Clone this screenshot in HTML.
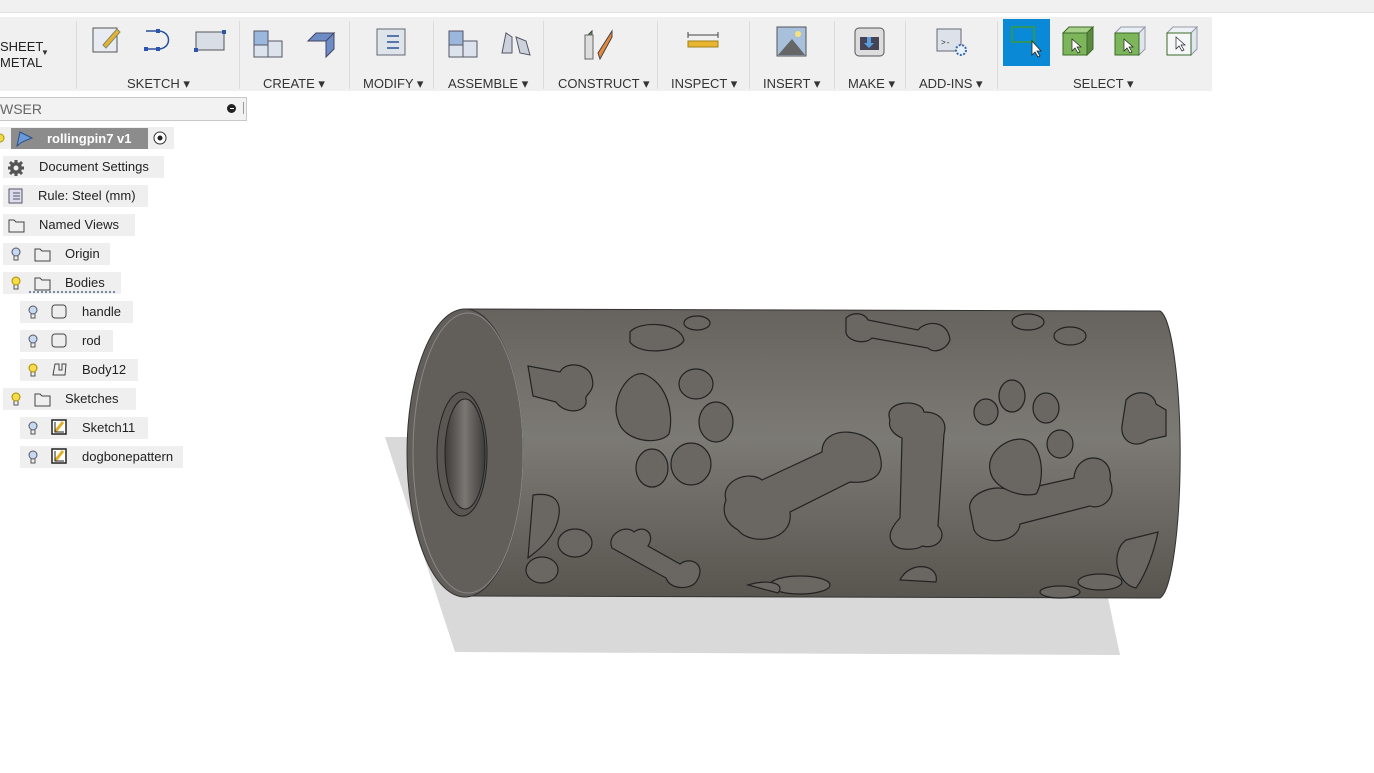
<!DOCTYPE html>
<html><head><meta charset="utf-8"><style>
body{margin:0;width:1374px;height:773px;background:#fff;position:relative;overflow:hidden;font-family:"Liberation Sans",sans-serif;}
.a{position:absolute}
.tb{left:0;top:17px;width:1212px;height:74px;background:#f0f0f0}
.sep{position:absolute;top:4px;width:1px;height:68px;background:#dcdcdc}
.lbl{position:absolute;top:59px;font-size:13px;color:#333;white-space:nowrap}
.row{position:absolute;height:22px;background:#efefef;font-size:13px;color:#222;line-height:22px}
.ic{position:absolute}
</style></head><body>
<div class="a" style="left:0;top:0;width:1374px;height:12px;background:#f0f0f0;border-bottom:1px solid #e2e2e2"></div>
<div class="a tb">
 <div class="a" style="left:0;top:22px;font-size:13px;line-height:16px;color:#222">SHEET<br>METAL</div>
 <div class="a" style="left:41px;top:31px;font-size:8px;color:#333">▼</div>
 <div class="sep" style="left:76px"></div><div class="sep" style="left:239px"></div><div class="sep" style="left:349px"></div><div class="sep" style="left:433px"></div><div class="sep" style="left:543px"></div><div class="sep" style="left:657px"></div><div class="sep" style="left:749px"></div><div class="sep" style="left:834px"></div><div class="sep" style="left:905px"></div><div class="sep" style="left:997px"></div>
 <div class="lbl" style="left:127px">SKETCH ▾</div>
 <div class="lbl" style="left:263px">CREATE ▾</div>
 <div class="lbl" style="left:363px">MODIFY ▾</div>
 <div class="lbl" style="left:448px">ASSEMBLE ▾</div>
 <div class="lbl" style="left:558px">CONSTRUCT ▾</div>
 <div class="lbl" style="left:671px">INSPECT ▾</div>
 <div class="lbl" style="left:763px">INSERT ▾</div>
 <div class="lbl" style="left:848px">MAKE ▾</div>
 <div class="lbl" style="left:919px">ADD-INS ▾</div>
 <div class="lbl" style="left:1073px">SELECT ▾</div>
 <div class="a" style="left:1003px;top:2px;width:47px;height:47px;background:#0a8ad6"></div>
 <svg class="a" style="left:0;top:0" width="1212" height="60">
  <g stroke="#555" fill="#e8ecf2"><rect x="93" y="11" width="24" height="24"/><path d="M103 28 L117 12 l3 3 L106 31z" fill="#e4b430" stroke="#886"/></g>
  <path d="M146 32h12 M158 32 c14 0 14-18 0-18 M146 14h12" fill="none" stroke="#2a4f9a" stroke-width="1.5"/><rect x="144" y="30" width="4" height="4" fill="#2a56b0"/><rect x="156" y="30" width="4" height="4" fill="#2a56b0"/><rect x="156" y="12" width="4" height="4" fill="#2a56b0"/>
  <rect x="196" y="15" width="28" height="18" fill="#d8dde6" stroke="#555"/><rect x="194" y="31" width="4" height="4" fill="#2a56b0"/><rect x="222" y="13" width="4" height="4" fill="#2a56b0"/>
  <g stroke="#556" fill="#dde3ec"><rect x="254" y="14" width="14" height="14" fill="#9cb7de"/><rect x="254" y="28" width="14" height="12"/><rect x="268" y="24" width="14" height="16"/></g>
  <path d="M308 24 l8-8 h18 l-8 8z M326 24 l8-8 v16 l-8 8z" fill="#6d8bc4" stroke="#446"/><path d="M308 24h18v16" fill="none" stroke="#446"/>
  <rect x="377" y="12" width="28" height="26" fill="#dfe3ea" stroke="#667"/><g stroke="#5577aa" stroke-width="2"><path d="M387 19h12M387 25h12M387 31h12"/></g>
  <g stroke="#556" fill="#dde3ec"><rect x="449" y="14" width="14" height="14" fill="#9cb7de"/><rect x="449" y="28" width="14" height="12"/><rect x="463" y="24" width="14" height="16"/></g>
  <path d="M502 36 l4-20 6 4 v16z M516 20 l10 4 4 14 -10-2z" fill="#ccd2dc" stroke="#556"/>
  <path d="M586 20 l6-6 v24 l-6 4z" fill="#4c9a48" stroke="#444"/><path d="M598 36 l14-22 v6 l-12 22z" fill="#e8883a" stroke="#444"/><rect x="585" y="18" width="8" height="24" fill="#ddd" stroke="#666"/>
  <path d="M688 18h30 M688 15v6 M718 15v6" stroke="#444"/><rect x="688" y="24" width="30" height="6" fill="#e9b430" stroke="#a08020"/>
  <rect x="777" y="10" width="29" height="29" fill="#a8c0dc" stroke="#555"/><path d="M778 38 l14-16 13 16z" fill="#666"/><circle cx="798" cy="17" r="3" fill="#f6e27a"/>
  <rect x="855" y="11" width="29" height="28" rx="4" fill="#ddd" stroke="#555"/><rect x="860" y="20" width="19" height="13" fill="#445"/><path d="M867 20v6h-3l5 5 5-5h-3v-6z" fill="#5aa0e0"/>
  <rect x="937" y="12" width="24" height="22" fill="#dde2ea" stroke="#667"/><text x="941" y="28" font-size="8" fill="#333" font-family="Liberation Mono">&gt;-</text><circle cx="961" cy="33" r="5" fill="#e8f0fa" stroke="#3a6ab0" stroke-width="2" stroke-dasharray="2 1.5"/>
  <rect x="1012" y="10" width="22" height="15" fill="none" stroke="#3a9a3a" stroke-width="1.5"/><path d="M1032 24 v14 l3-3 3 5 2-1 -3-5 4 0z" fill="#fff" stroke="#222" stroke-width=".8"/>
  <g stroke="#3d6a2a"><path d="M1063 16 l6-6 h24 l-6 6z" fill="#a8d08a"/><path d="M1087 16 l6-6 v22 l-6 6z" fill="#5b8a3e"/><rect x="1063" y="16" width="24" height="22" fill="#7cb55a"/></g><path d="M1072 22v12l3-3 3 5 2-1-3-5h4z" fill="#fff" stroke="#222" stroke-width=".7"/>
  <g stroke="#3d6a2a"><path d="M1115 16 l6-6 h24 l-6 6z" fill="#e8eef4" stroke="#99a"/><path d="M1139 16 l6-6 v22 l-6 6z" fill="#e0e6ee" stroke="#99a"/><rect x="1115" y="16" width="24" height="22" fill="#7cb55a"/></g><path d="M1124 22v12l3-3 3 5 2-1-3-5h4z" fill="#fff" stroke="#222" stroke-width=".7"/>
  <g stroke="#99a"><path d="M1167 16 l6-6 h24 l-6 6z" fill="#eef2f6"/><path d="M1191 16 l6-6 v22 l-6 6z" fill="#dfe6ee"/><rect x="1167" y="16" width="24" height="22" fill="#f4f6f8" stroke="#3d6a2a"/></g><path d="M1176 20v12l3-3 3 5 2-1-3-5h4z" fill="#fff" stroke="#222" stroke-width=".7"/>
 </svg>
</div>
<div class="a" style="left:0;top:97px;width:246px;height:22px;background:#f2f2f2;border:1px solid #c8c8c8;border-left:none"></div>
<div class="a" style="left:0;top:101px;font-size:14px;color:#666">WSER</div>
<div class="a" style="left:227px;top:104px;width:9px;height:9px;border-radius:50%;background:#222"></div>
<div class="a" style="left:230px;top:108px;width:4px;height:1px;background:#fff"></div>
<div class="a" style="left:243px;top:102px;width:1px;height:12px;background:#999"></div>

<div class="row" style="left:0;top:127px;width:174px"></div>
<div class="a" style="left:11px;top:128px;width:137px;height:21px;background:#8c8c8c"></div>
<div class="a" style="left:47px;top:131px;font-size:13px;font-weight:bold;color:#fff">rollingpin7 v1</div>
<svg class="a" style="left:0;top:128px" width="175" height="24"><circle cx="0" cy="10" r="4" fill="#f2d84a" stroke="#a90"/><path d="M17 18 L20 4 l12 6 -10 4z" fill="#6b9ad8" stroke="#2a4f8a"/><circle cx="160" cy="10" r="6" fill="#fff" stroke="#333"/><circle cx="160" cy="10" r="2.5" fill="#222"/></svg>
<div class="row" style="left:3px;top:156px;width:161px;padding-left:36px;box-sizing:border-box">Document Settings</div>
<div class="row" style="left:3px;top:185px;width:145px;padding-left:35px;box-sizing:border-box">Rule: Steel (mm)</div>
<div class="row" style="left:3px;top:214px;width:132px;padding-left:36px;box-sizing:border-box">Named Views</div>
<div class="row" style="left:3px;top:243px;width:107px;padding-left:62px;box-sizing:border-box">Origin</div>
<div class="row" style="left:3px;top:272px;width:118px;padding-left:62px;box-sizing:border-box">Bodies</div>
<div class="a" style="left:29px;top:291px;width:88px;height:2px;background:repeating-linear-gradient(90deg,#7a8aa0 0 2px,transparent 2px 4px)"></div>
<div class="row" style="left:20px;top:301px;width:113px;padding-left:62px;box-sizing:border-box">handle</div>
<div class="row" style="left:20px;top:330px;width:93px;padding-left:62px;box-sizing:border-box">rod</div>
<div class="row" style="left:20px;top:359px;width:118px;padding-left:62px;box-sizing:border-box">Body12</div>
<div class="row" style="left:3px;top:388px;width:133px;padding-left:62px;box-sizing:border-box">Sketches</div>
<div class="row" style="left:20px;top:417px;width:128px;padding-left:62px;box-sizing:border-box">Sketch11</div>
<div class="row" style="left:20px;top:446px;width:163px;padding-left:62px;box-sizing:border-box">dogbonepattern</div>
<svg class="a" style="left:0;top:150px" width="80" height="330">
 <g transform="translate(16,18)"><circle r="6" fill="#555"/><circle r="2.5" fill="#efefef"/><g stroke="#555" stroke-width="3"><path d="M0-8v16M-8 0h16M-6-6l12 12M6-6l-12 12"/></g><circle r="2.5" fill="#efefef"/></g>
 <rect x="9" y="39" width="13" height="14" fill="#dde" stroke="#556"/><path d="M13 43h7M13 46h7M13 49h7" stroke="#556"/>
 <path d="M9 70h5l2 2h8v10H9z" fill="none" stroke="#444"/>
 <path d="M35 99h5l2 2h8v10H35z" fill="none" stroke="#444"/>
 <path d="M35 128h5l2 2h8v10H35z" fill="none" stroke="#444"/>
 <path d="M35 244h5l2 2h8v10H35z" fill="none" stroke="#444"/>
 <g stroke="#556" fill="#c7d9f0"><circle cx="16" cy="102" r="4"/><circle cx="33" cy="160" r="4"/><circle cx="33" cy="189" r="4"/><circle cx="33" cy="276" r="4"/><circle cx="33" cy="305" r="4"/></g>
 <g stroke="#a98a00" fill="#f5dc4a"><circle cx="16" cy="131" r="4"/><circle cx="33" cy="218" r="4"/><circle cx="16" cy="247" r="4"/></g>
 <g stroke="#555" stroke-width="1"><path d="M14 106v4h4v-4M31 164v4h4v-4M31 193v4h4v-4M31 222v4h4v-4M14 135v4h4v-4M14 251v4h4v-4M31 280v4h4v-4M31 309v4h4v-4" fill="none"/></g>
 <rect x="52" y="155" width="14" height="13" rx="3" fill="#eee" stroke="#444"/><rect x="52" y="184" width="14" height="13" rx="3" fill="#eee" stroke="#444"/>
 <path d="M53 225l2-11h4v6h3v-6h4l-1 11z" fill="none" stroke="#444"/>
 <rect x="52" y="270" width="14" height="14" fill="#fff" stroke="#222" stroke-width="1.5"/><path d="M55 282l8-10" stroke="#e0b020" stroke-width="3"/><path d="M55 272v10h9" fill="none" stroke="#222"/>
 <rect x="52" y="299" width="14" height="14" fill="#fff" stroke="#222" stroke-width="1.5"/><path d="M55 311l8-10" stroke="#e0b020" stroke-width="3"/><path d="M55 301v10h9" fill="none" stroke="#222"/>
</svg>

<svg class="a" style="left:0;top:0" width="1374" height="773">
 <defs>
  <linearGradient id="cy" x1="0" y1="0" x2="0" y2="1">
   <stop offset="0" stop-color="#66625d"/><stop offset="0.15" stop-color="#6e6b66"/><stop offset="0.45" stop-color="#7c7a75"/><stop offset="0.7" stop-color="#6c6964"/><stop offset="1" stop-color="#58554f"/>
  </linearGradient>
  <linearGradient id="hole" x1="0" y1="0" x2="1" y2="0"><stop offset="0" stop-color="#3e3c39"/><stop offset="0.5" stop-color="#7a7772"/><stop offset="1" stop-color="#3e3c39"/></linearGradient>
 </defs>
 <path d="M385 437 L430 437 L1100 560 L1120 655 L455 652 Z" fill="#d9d9d9"/>
 <path d="M465 309 L1160 311 A22 144 0 0 1 1160 598 L465 596 Z" fill="url(#cy)" stroke="#333" stroke-width="1"/>
 <ellipse cx="465" cy="453" rx="58" ry="144" fill="#625f5b" stroke="#333"/>
 <ellipse cx="468" cy="453" rx="55" ry="140" fill="none" stroke="#888" stroke-width="1"/>
 <ellipse cx="462" cy="454" rx="25" ry="62" fill="#5a5753" stroke="#222"/>
 <ellipse cx="465" cy="454" rx="20" ry="55" fill="url(#hole)" stroke="#222"/>
 <g fill="#6a6762" stroke="#222" stroke-width="1.2">
  <path d="M528 366 L560 372 c6-12 30-8 32 6 c4 14 -8 16 -6 22 c2 12 -20 16 -30 2 L533 396z"/>
  <path d="M618 420 c-8-20 10-50 26-46 c24 10 30 40 25 60 c-10 12 -46 8 -51-14z"/>
  <ellipse cx="696" cy="384" rx="17" ry="15"/><ellipse cx="716" cy="422" rx="17" ry="20"/><ellipse cx="652" cy="468" rx="16" ry="19"/><ellipse cx="691" cy="464" rx="20" ry="21"/>
  <ellipse cx="575" cy="543" rx="17" ry="14"/><ellipse cx="542" cy="570" rx="16" ry="13"/>
  <path d="M533 495 c20-3 30 5 25 25 c-5 20 -20 30 -30 38 z"/>
  <path d="M612 548 c-6-14 14-24 22-16 c10-8 22 2 14 14 l32 18 c10-8 28 0 16 18 c-6 8 -26 8 -30 -4z"/>
  <path d="M726 500 c-6-20 24-30 36-20 l60-28 c0-30 54-24 58 4 c6 20 -10 28 -30 26 l-60 30 c4 30 -40 34 -52 18 c-14-8-16-20-12-30z"/>
  <path d="M890 420 c-8-20 32-22 34-8 c14 0 24 8 20 22 l-6 92 c10 10 0 24 -16 20 c-4 4 -26 6 -30 -4 c-6-8 4-20 8-24 l2-80 c-10-4 -14-12 -12-18z"/>
  <path d="M970 510 c-4-18 30-28 42-18 l62-14 c2-28 40-26 36 2 c8 20 -10 30 -20 26 l-70 18 c-2 20 -38 22 -46 6z"/>
  <path d="M990 470 c-4-20 24-38 40-28 c14 10 14 40 6 52 c-16 4 -44 -6 -46 -24z"/>
  <ellipse cx="986" cy="412" rx="12" ry="13"/><ellipse cx="1012" cy="396" rx="13" ry="16"/><ellipse cx="1046" cy="408" rx="13" ry="15"/><ellipse cx="1060" cy="444" rx="13" ry="14"/>
  <path d="M1126 400 c10-12 28-8 30 4 l10 6 v26 l-18 4 c-14 10 -28 0 -26 -14z"/>
  <path d="M1126 540 l32-8 c-4 20 -12 42 -22 56 c-20 -4 -26 -36 -10 -48z"/>
  <path d="M846 318 c6-6 18-6 22 2 l50 10 c8-10 30-10 32 10 c-4 10 -16 14 -22 8 l-56-10 c-8 8 -28 2 -26-8z"/>
  <path d="M630 332 c10-12 50-10 54 8 c-4 12 -44 16 -54 2z"/>
  <ellipse cx="697" cy="323" rx="13" ry="7"/><ellipse cx="1070" cy="336" rx="16" ry="9"/><ellipse cx="1028" cy="322" rx="16" ry="8"/>
  <ellipse cx="800" cy="585" rx="30" ry="9"/><ellipse cx="1100" cy="582" rx="22" ry="8"/><ellipse cx="1060" cy="592" rx="20" ry="6"/>
  <path d="M900 580 c10-20 40-16 36 2z"/><path d="M748 585 c20-6 38-2 30 8z"/>
 </g>
</svg>
</body></html>
